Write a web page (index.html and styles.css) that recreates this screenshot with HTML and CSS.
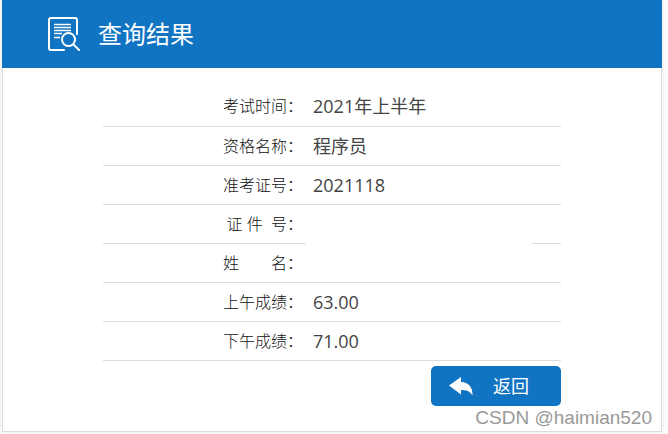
FILE: index.html
```html
<!DOCTYPE html>
<html lang="zh-CN">
	<head>
		<meta charset="UTF-8">
		<title>查询结果</title>
		<link rel="stylesheet" href="styles.css">
	</head>
	<body>
		<div class="result-box">
			<div class="title">
				<svg class="title-icon" viewBox="0 0 32 36" width="32" height="36">
					<path d="M29 18V4Q29 2 27 2H3Q1 2 1 4V32Q1 34 3 34H16"/>
					<path class="thin" d="M6 8.500H23M6 11.500H23M6 14.500H23M6 17.500H14M6 21.500H12"/>
					<circle cx="20.500" cy="23.500" r="6.500"/>
					<path d="M25.500 28.500L31 34"/>
				</svg>
				<h1>查询结果</h1>
			</div>
			<div class="content">
				<table class="result">
					<tr>
						<th scope="row">考试时间：</th>
						<td>2021年上半年</td>
					</tr>
					<tr>
						<th scope="row">资格名称：</th>
						<td>程序员</td>
					</tr>
					<tr>
						<th scope="row">准考证号：</th>
						<td>2021118</td>
					</tr>
					<tr>
						<th scope="row">证&nbsp;件&nbsp;&nbsp;号：</th>
						<td><span class="cover"></span></td>
					</tr>
					<tr>
						<th scope="row">姓&emsp;&emsp;名：</th>
						<td></td>
					</tr>
					<tr>
						<th scope="row">上午成绩：</th>
						<td>63.00</td>
					</tr>
					<tr>
						<th scope="row">下午成绩：</th>
						<td>71.00</td>
					</tr>
				</table>
				<div class="btns">
					<button type="button" class="back">
						<svg viewBox="0 0 24 20" width="24" height="20">
							<path d="M0 9.500L12 1V6C19 6 24 11 23.500 19.500C21 15 17 14 12 14V18.500Z"/>
						</svg>
						<span>返回</span>
					</button>
				</div>
			</div>
			<div class="watermark">CSDN @haimian520</div>
		</div>
	</body>
</html>
```
FILE: styles.css
```css
*{
	margin: 0;
	padding: 0;
	box-sizing: border-box;
}
body{
	padding: 0 6px 2px 2px;
	background-color: #fdfdfd;
	font-family: "Open Sans", "Noto Sans CJK SC", sans-serif;
	color: #444;
}
.result-box{
	position: relative;
	background-color: #fff;
	border: 1px solid #dcdcdc;
	border-top: none;
	box-shadow: 0 0 6px rgba(0, 0, 0, 0.08);
}
.title{
	display: flex;
	align-items: center;
	gap: 18px;
	height: 68px;
	/*盖住左右边框*/
	margin: 0 -1px;
	padding-left: 46px;
	background-color: #1174c3;
	color: #fff;
}
.title h1{
	font-size: 24px;
	line-height: 36px;
	font-weight: normal;
}
.title-icon{
	fill: none;
	stroke: #fff;
	stroke-width: 2;
	stroke-linecap: round;
}
.title-icon .thin{
	stroke-width: 1.5;
	stroke-linecap: butt;
}
.content{
	padding: 19px 100px 25px;
}
.result{
	width: 100%;
	border-collapse: collapse;
}
.result tr{
	height: 39px;
	border-bottom: 1px solid #dcdcdc;
}
.result th{
	width: 200px;
	font-size: 16px;
	line-height: 24px;
	font-weight: 300;
	text-align: right;
	white-space: nowrap;
	color: #111;
}
.result td{
	position: relative;
	padding-left: 10px;
	font-size: 18px;
	line-height: 24px;
}
/*遮住证件号和姓名*/
.cover{
	position: absolute;
	top: 0;
	left: 3px;
	right: 29px;
	height: 60px;
	background-color: #fff;
}
.btns{
	display: flex;
	justify-content: flex-end;
	padding-top: 5px;
}
.back{
	display: flex;
	align-items: center;
	gap: 20px;
	width: 130px;
	height: 40px;
	padding-left: 18px;
	border: none;
	border-radius: 5px;
	background-color: #1174c3;
	color: #fff;
	font-family: inherit;
	font-size: 18px;
	line-height: 24px;
	cursor: pointer;
}
.back svg{
	fill: #fff;
}
.watermark{
	position: absolute;
	right: 9px;
	bottom: 1px;
	font-family: "Liberation Sans", Arial, sans-serif;
	font-size: 19px;
	line-height: 24px;
	color: #999;
	text-shadow: -1px -1px 0 #fff;
}
```
